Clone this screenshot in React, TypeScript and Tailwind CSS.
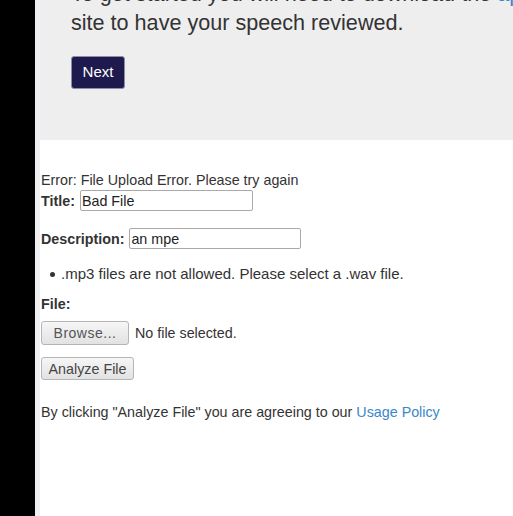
import React from "react";

const font = { fontFamily: '"Liberation Sans", Arial, sans-serif' };

export default function App() {
  return (
    <div className="flex h-[516px] w-[513px] overflow-hidden bg-white text-[#333]" style={font}>
      <div className="w-[35px] shrink-0 bg-black" />
      <div className="w-[5px] shrink-0 bg-[#eef0f3]" />
      <div className="flex min-w-0 flex-1 flex-col">
        {/* intro panel */}
        <div className="h-[140px] shrink-0 overflow-hidden bg-[#eeeeee] pl-[31px]">
          <p className="mt-[-20px] w-[470px] whitespace-nowrap text-[21.6px] leading-[28.5px] text-[#333]">
            To get started you will need to download the <span className="text-[#3a87c8]">app</span>
            <br />
            site to have your speech reviewed.
          </p>
          <button className="mt-[19px] h-[33px] w-[54px] rounded-[3px] border border-[#8e8ca8] bg-[#1e1a4e] text-[15px] text-white">
            Next
          </button>
        </div>

        {/* upload form */}
        <div className="pl-[1px] pt-[30px] text-[14.3px] leading-[20px]">
          <div>Error: File Upload Error. Please try again</div>
          <div className="flex items-center">
            <span className="font-bold">Title:</span>
            <input
              defaultValue="Bad File"
              className="ml-[5px] h-[21px] w-[173px] rounded-[2px] border border-[#a9a9a9] px-[1px] text-[14.3px] text-[#222] outline-none"
            />
          </div>
          <div className="mt-[17px] flex items-center">
            <span className="font-bold">Description:</span>
            <input
              defaultValue="an mpe"
              className="ml-[5px] h-[21px] w-[172px] rounded-[2px] border border-[#a9a9a9] px-[1px] text-[14.3px] text-[#222] outline-none"
            />
          </div>
          <ul className="mt-[15px] list-none pl-[9px]">
            <li className="flex items-center">
              <span className="h-[5px] w-[5px] shrink-0 rounded-full bg-[#333]" />
              <span className="ml-[6px] text-[15px]">.mp3 files are not allowed. Please select a .wav file.</span>
            </li>
          </ul>
          <div className="mt-[10px] font-bold">File:</div>
          <div className="mt-[7px] flex items-center">
            <button className="h-[24px] w-[88px] rounded-[3px] border border-[#b5b5b5] bg-gradient-to-b from-[#f6f6f6] to-[#e2e2e2] text-[14px] tracking-[0.5px] text-[#555]">
              Browse...
            </button>
            <span className="ml-[6px] text-[#333]">No file selected.</span>
          </div>
          <button className="mt-[12px] h-[23px] w-[93px] rounded-[3px] border border-[#b5b5b5] bg-gradient-to-b from-[#f6f6f6] to-[#e2e2e2] text-[14.3px] text-[#444]">
            Analyze File
          </button>
          <p className="mt-[22px]">
            By clicking "Analyze File" you are agreeing to our{" "}
            <a className="text-[#3a87c8]">Usage Policy</a>
          </p>
        </div>
      </div>
    </div>
  );
}
